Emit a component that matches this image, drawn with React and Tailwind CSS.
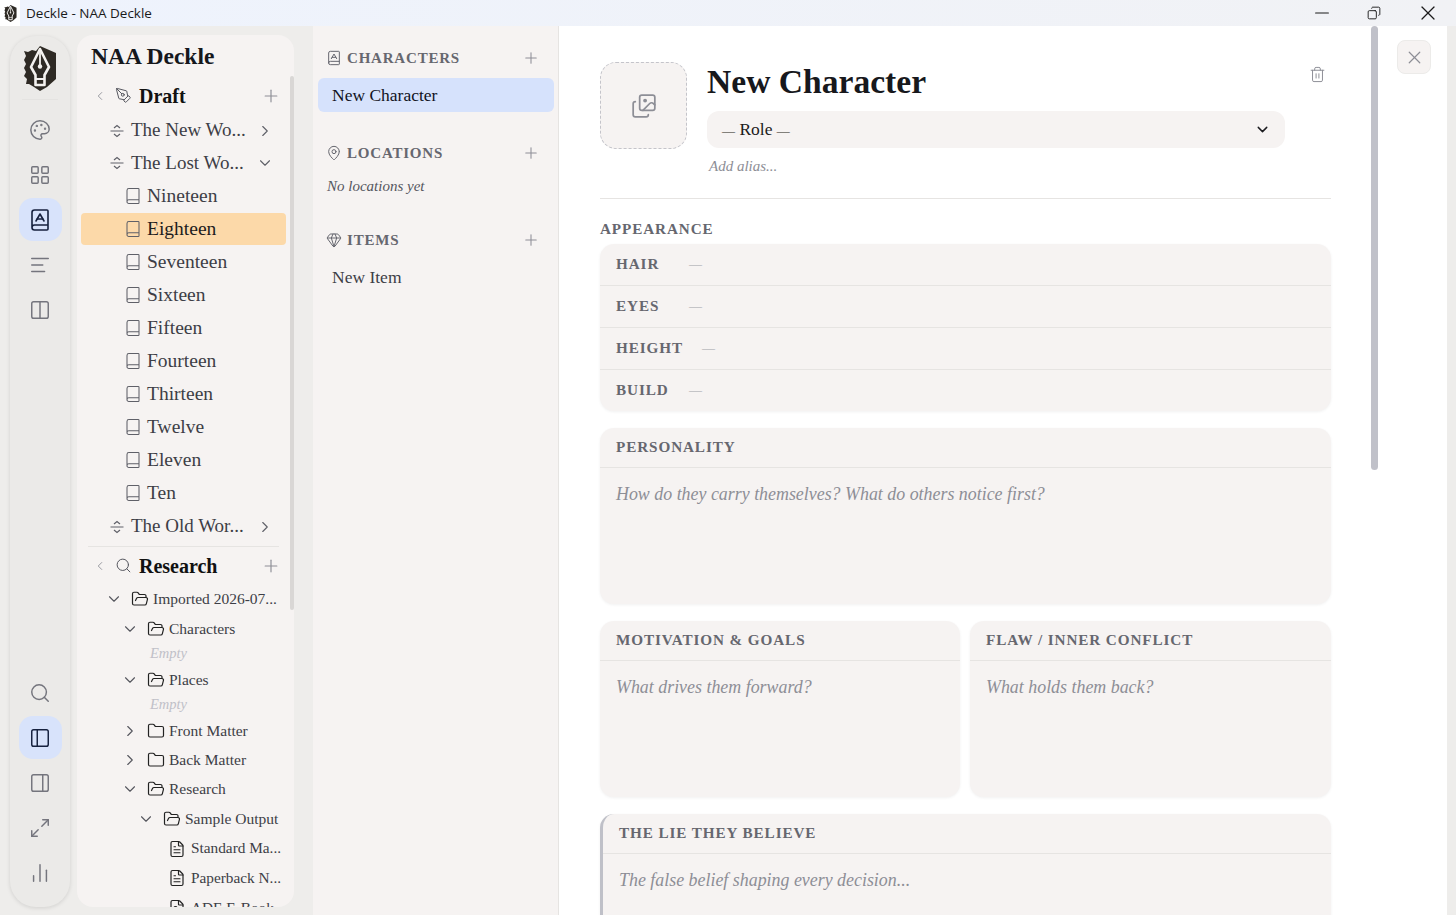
import {
  Palette, LayoutGrid, BookA, AlignLeft, Columns2, Search, PanelLeft, PanelRight, Maximize2, ChartNoAxesColumn,
  Plus, ChevronLeft, ChevronRight, ChevronDown, PenTool, Book, FolderOpen, Folder, FileText, FileImage, MapPin, Gem,
  Images, Trash2, X, Minus, Copy,
} from "lucide-react";

const Logo = ({ w = 34, h = 45 }) => (
  <svg width={w} height={h} viewBox="0 0 34 45" className="shrink-0">
    <path d="M1 5 L5 6 L9 4 L13 5 L17 0 L33 7 L33 33 L24 41 L17 45 L11 41 L6 38 L3 38 L4 33 L1 30 L3 26 L1 22 L3 18 L1 14 L3 10 Z" fill="#2e2a24" />
    <path d="M17 3 L26 21 L21.5 29 L21.5 39 L12.5 39 L12.5 29 L8 21 Z" fill="#2e2a24" stroke="#f3f1ee" strokeWidth="2.6" strokeLinejoin="round" />
    <path d="M12 33 H22 M17 6 V19" stroke="#f3f1ee" strokeWidth="1.8" />
    <circle cx="17" cy="20.5" r="2.2" fill="#f3f1ee" />
  </svg>
);

const FoldIcon = () => (
  <svg width="14" height="14" viewBox="0 0 14 14" fill="none" stroke="#5f6068" strokeWidth="1.2" className="shrink-0">
    <path d="M0.5 7 H13.5 M4 4 L7 1.5 L10 4 M4 10 L7 12.5 L10 10" />
  </svg>
);

const RailButton = ({ icon: Icon, active, size = 22 }) => (
  <div className={`w-[43px] h-[43px] rounded-[14px] flex items-center justify-center ${active ? "bg-[#d8e3fb] text-[#16213e]" : "text-[#74757d]"}`}>
    <Icon size={size} strokeWidth={1.6} />
  </div>
);

const chapters = ["Nineteen", "Eighteen", "Seventeen", "Sixteen", "Fifteen", "Fourteen", "Thirteen", "Twelve", "Eleven", "Ten"];

const Work = ({ title, open, className = "h-[33px]" }) => (
  <div className={`flex items-center pl-[33px] pr-[20px] text-[19px] text-[#3d3e46] ${className}`}>
    <FoldIcon />
    <span className="ml-[7px] flex-1 whitespace-nowrap">{title}</span>
    {open ? <ChevronDown size={18} strokeWidth={1.5} className="text-[#5f6068]" /> : <ChevronRight size={18} strokeWidth={1.5} className="text-[#5f6068]" />}
  </div>
);

const SectionHead = ({ icon: Icon, title }) => (
  <div className="h-[37px] flex items-center pl-[16px] pr-[13px] text-[#111]">
    <ChevronLeft size={14} strokeWidth={1.5} className="text-[#8d8e96]" />
    <Icon size={17} strokeWidth={1.4} className="ml-[8px] text-[#55565e]" />
    <span className="ml-[7px] flex-1 text-[20px] font-bold">{title}</span>
    <Plus size={20} strokeWidth={1.4} className="text-[#8d8e96]" />
  </div>
);

const research = [
  { t: "Imported 2026-07...", d: 0, k: "open", h: 30 },
  { t: "Characters", d: 1, k: "open", h: 30 },
  { t: "Empty", d: 2, k: "empty", h: 20 },
  { t: "Places", d: 1, k: "open", h: 31 },
  { t: "Empty", d: 2, k: "empty", h: 20 },
  { t: "Front Matter", d: 1, k: "closed", h: 31 },
  { t: "Back Matter", d: 1, k: "closed", h: 28 },
  { t: "Research", d: 1, k: "open", h: 30 },
  { t: "Sample Output", d: 2, k: "open", h: 30 },
  { t: "Standard Ma...", d: 3, k: "file", h: 29 },
  { t: "Paperback N...", d: 3, k: "file", h: 30 },
  { t: "ADE E-Book", d: 3, k: "img", h: 30 },
];

const ResearchRow = ({ t, d, k, h }) => {
  if (k === "empty")
    return <div style={{ height: h, paddingLeft: 73 }} className="flex items-center text-[14.5px] italic text-[#c0c0c8]">{t}</div>;
  if (k === "file" || k === "img") {
    const Icon = k === "file" ? FileText : FileImage;
    return (
      <div style={{ height: h, paddingLeft: 91 }} className="flex items-center text-[15.3px] text-[#3d3e46] whitespace-nowrap">
        <Icon size={18} strokeWidth={1.6} className="text-[#222] shrink-0" />
        <span className="ml-[5px]">{t}</span>
      </div>
    );
  }
  return (
    <div style={{ height: h, paddingLeft: 28 + d * 16 }} className="flex items-center text-[15.5px] text-[#3d3e46] whitespace-nowrap">
      {k === "closed" ? <ChevronRight size={18} strokeWidth={1.5} className="text-[#55565e] shrink-0" /> : <ChevronDown size={18} strokeWidth={1.5} className="text-[#55565e] shrink-0" />}
      <span className="ml-[8px] shrink-0">
        {k === "closed" ? <Folder size={18} strokeWidth={1.6} className="text-[#222]" /> : <FolderOpen size={18} strokeWidth={1.6} className="text-[#222]" />}
      </span>
      <span className="ml-[4px]">{t}</span>
    </div>
  );
};

const Sidebar = () => (
  <div className="relative w-[217px] mt-[9px] mb-[8px] ml-[7px] rounded-[16px] bg-[#f6f3f2] overflow-hidden">
    <div className="h-[42px] pt-[7px] pl-[14px] text-[23.5px] leading-[29px] font-bold text-[#15171c]">NAA Deckle</div>
    <SectionHead icon={PenTool} title="Draft" />
    <Work title="The New Wo..." />
    <Work title="The Lost Wo..." open className="h-[32px]" />
    {chapters.map((c) => (
      <div key={c} className={`flex items-center text-[19.5px] ${c === "Eighteen" ? "ml-[4px] mr-[8px] pl-[43px] rounded-[4px] bg-[#fcd9a9] text-[#1c1c20] h-[32px] my-[0.5px]" : "h-[33px] pl-[47px] text-[#3d3e46]"}`}>
        <Book size={18} strokeWidth={1.4} className="text-[#5f6068] shrink-0" />
        <span className="ml-[5px]">{c}</span>
      </div>
    ))}
    <Work title="The Old Wor..." className="h-[33px] mt-[1px]" />
    <div className="ml-[11px] mr-[15px] mt-[3px] h-px bg-[#e6e4e2]" />
    <SectionHead icon={Search} title="Research" />
    {research.map((r, i) => <ResearchRow key={i} {...r} />)}
    <div className="absolute right-0 top-[41px] w-[4px] h-[534px] bg-[#d9d7d5] rounded-full" />
  </div>
);

const PanelHead = ({ icon: Icon, title }) => (
  <div className="flex items-center h-[20px] pl-[13px] pr-[18px]">
    <Icon size={16} strokeWidth={1.5} className="text-[#66676f]" />
    <span className="ml-[5px] flex-1 text-[15px] font-bold tracking-[0.8px] text-[#66676f]">{title}</span>
    <Plus size={18} strokeWidth={1.4} className="text-[#8d8e96]" />
  </div>
);

const EntityPanel = () => (
  <div className="w-[246px] bg-[#f6f3f2] border-r border-[#e6e4e2] pt-[22px]">
    <PanelHead icon={BookA} title="CHARACTERS" />
    <div className="mt-[10px] ml-[5px] mr-[4px] h-[34px] rounded-[6px] bg-[#d6e2fc] pl-[14px] flex items-center text-[17.5px] text-[#10121c]">New Character</div>
    <div className="mt-[31px]"><PanelHead icon={MapPin} title="LOCATIONS" /></div>
    <div className="mt-[13px] pl-[14px] text-[15px] leading-[20px] italic text-[#55565e]">No locations yet</div>
    <div className="mt-[34px]"><PanelHead icon={Gem} title="ITEMS" /></div>
    <div className="mt-[15px] pl-[19px] text-[17.5px] leading-[24px] text-[#3d3e46]">New Item</div>
  </div>
);

const Card = ({ children, className = "" }) => (
  <div className={`rounded-[14px] bg-[#f6f3f2] shadow-[0_1px_3px_rgba(0,0,0,0.06)] overflow-hidden ${className}`}>{children}</div>
);

const Label = ({ children, className = "" }) => (
  <span className={`text-[15.2px] font-bold tracking-[0.9px] text-[#66676f] ${className}`}>{children}</span>
);

const TextCard = ({ title, hint, className = "" }) => (
  <Card className={className}>
    <div className="h-[176px]">
      <div className="h-[40px] pb-[1px] px-[16px] flex items-center border-b border-[#e6e4e2]"><Label>{title}</Label></div>
      <div className="pt-[14px] px-[16px] text-[17.9px] leading-[24px] italic text-[#8d8e96]">{hint}</div>
    </div>
  </Card>
);

const fields = ["HAIR", "EYES", "HEIGHT", "BUILD"];

const Main = () => (
  <div className="relative flex-1 bg-white overflow-hidden pl-[41px] pt-[36px]">
    <div className="w-[731px]">
      <div className="relative flex h-[137px] border-b border-[#e6e4e2]">
        <div className="w-[87px] h-[87px] rounded-[16px] border border-dashed border-[#c4c4ca] bg-[#f6f3f2] flex items-center justify-center text-[#8d8e96]">
          <Images size={26} strokeWidth={1.6} />
        </div>
        <div className="ml-[20px] flex-1">
          <div className="h-[49px] text-[33.6px] leading-[40px] font-bold text-[#17181c]">New Character</div>
          <div className="w-[578px] h-[37px] rounded-[12px] bg-[#f6f3f2] pl-[15px] pr-[14px] flex items-center justify-between text-[17.5px] text-[#1c1c20]">
            <span><span className="text-[13px]">—</span> Role <span className="text-[13px]">—</span></span>
            <ChevronDown size={17} strokeWidth={2} />
          </div>
          <div className="mt-[8px] pl-[2px] text-[15px] leading-[20px] italic text-[#8d8e96]">Add alias...</div>
        </div>
        <Trash2 size={17} strokeWidth={1.4} className="absolute right-[5px] top-[4px] text-[#8d8e96]" />
      </div>
      <div className="mt-[20px] h-[20px] flex items-center"><Label>APPEARANCE</Label></div>
      <Card className="mt-[5px]">
        {fields.map((f, i) => (
          <div key={f} className={`pb-[1px] pl-[16px] flex items-center ${i < 3 ? "h-[42px] border-b border-[#e6e4e2]" : "h-[41px]"}`}>
            <Label className="min-w-[54px]">{f}</Label>
            <span className="ml-[19px] text-[13px] text-[#a3a4aa]">—</span>
          </div>
        ))}
      </Card>
      <TextCard className="mt-[17px]" title="PERSONALITY" hint="How do they carry themselves? What do others notice first?" />
      <div className="mt-[17px] grid grid-cols-[360px_361px] gap-[10px]">
        <TextCard title="MOTIVATION & GOALS" hint="What drives them forward?" />
        <TextCard title="FLAW / INNER CONFLICT" hint="What holds them back?" />
      </div>
      <TextCard className="mt-[17px] border-l-[3px] border-[#bfc0c8]" title="THE LIE THEY BELIEVE" hint="The false belief shaping every decision..." />
    </div>
    <div className="absolute left-[812px] top-0 w-[7px] h-[444px] rounded-full bg-[#c0c1c9]" />
    <div className="absolute left-[838px] top-[14px] w-[34px] h-[34px] rounded-[8px] bg-[#f6f3f2] border border-[#ecebe9] flex items-center justify-center text-[#8d8e96]">
      <X size={21} strokeWidth={1.4} />
    </div>
  </div>
);

export default function App() {
  return (
    <div className="h-[915px] flex flex-col overflow-hidden bg-[#eeedeb] font-['Liberation_Serif',serif]">
      <div className="h-[26px] shrink-0 flex items-center bg-gradient-to-r from-[#eef3fd] to-[#f1f2f5] font-['Open_Sans',sans-serif] text-[13.5px] text-[#1a1a1a]">
        <div className="w-[20px] h-[26px] bg-white flex items-center justify-center"><Logo w={13} h={17} /></div>
        <span className="ml-[6px] flex-1">Deckle - NAA Deckle</span>
        <Minus size={22} strokeWidth={1.1} className="mr-[34px]" />
        <Copy size={14} strokeWidth={1.6} className="mr-[35px] -scale-x-100" />
        <X size={24} strokeWidth={1.2} className="mr-[16px]" />
      </div>
      <div className="flex-1 flex min-h-0">
        <div className="w-[60px] ml-[10px] mt-[10px] mb-[8px] rounded-[26px] bg-[#ebeae8] shadow-[0_1px_4px_rgba(0,0,0,0.12)] flex flex-col items-center">
          <div className="pt-[10px] h-[64px] w-[36px] border-b border-[#e4e3e1] flex justify-center"><Logo /></div>
          <div className="mt-[8px] flex flex-col gap-[2px]">
            <RailButton icon={Palette} />
            <RailButton icon={LayoutGrid} />
            <RailButton icon={BookA} active size={24} />
            <RailButton icon={AlignLeft} />
            <RailButton icon={Columns2} />
          </div>
          <div className="mt-auto mb-[13px] flex flex-col gap-[2px]">
            <RailButton icon={Search} />
            <RailButton icon={PanelLeft} active />
            <RailButton icon={PanelRight} />
            <RailButton icon={Maximize2} />
            <RailButton icon={ChartNoAxesColumn} />
          </div>
        </div>
        <Sidebar />
        <div className="w-[19px]" />
        <EntityPanel />
        <Main />
        <div className="w-[9px] bg-[#eeedeb]" />
      </div>
    </div>
  );
}
